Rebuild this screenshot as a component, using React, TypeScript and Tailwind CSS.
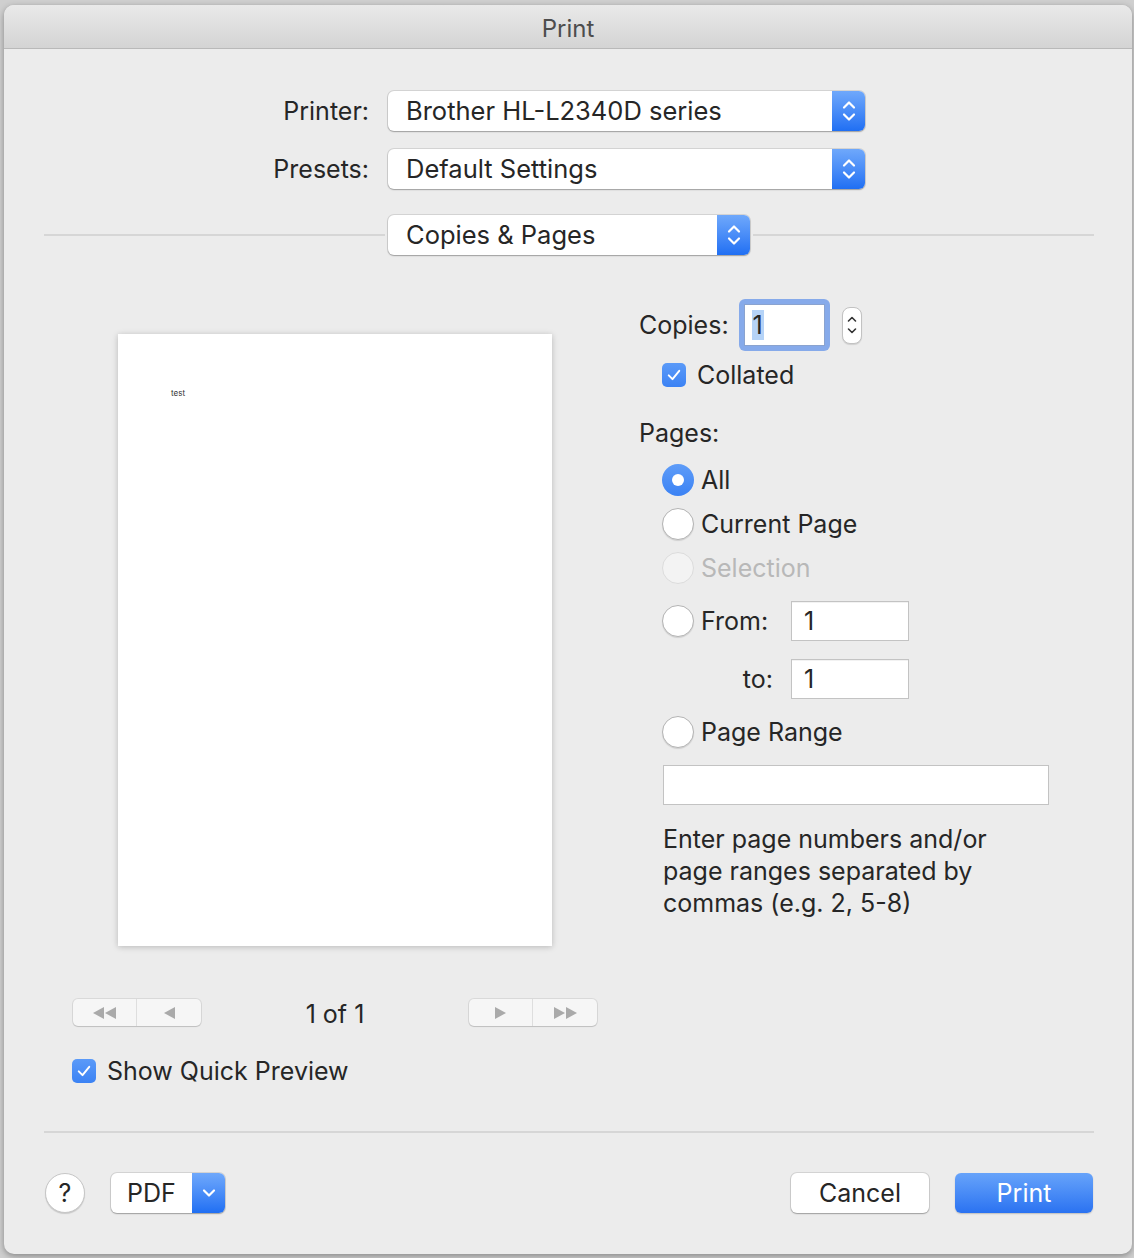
import React from 'react';

function UpDown({ className = 'w-[16px] h-[26px]' }: { className?: string }) {
  return (
    <svg viewBox="0 0 16 26" className={className} fill="none">
      <path d="M3 9.5 L8 4.5 L13 9.5" stroke="white" strokeWidth="2.2" strokeLinecap="round" strokeLinejoin="round" />
      <path d="M3 16.5 L8 21.5 L13 16.5" stroke="white" strokeWidth="2.2" strokeLinecap="round" strokeLinejoin="round" />
    </svg>
  );
}

function Popup({ label, className }: { label: string; className: string }) {
  return (
    <div
      className={`flex h-[40px] rounded-[6px] bg-white shadow-[0_0_0_1px_rgba(0,0,0,0.1),0_1px_1.5px_rgba(0,0,0,0.25)] ${className}`}
    >
      <div className="flex flex-1 items-center pl-[18px] text-[25.5px] text-[#262626]">{label}</div>
      <div className="flex w-[33px] items-center justify-center rounded-r-[6px] bg-linear-to-b from-[#6fa8fb] to-[#1f6ff3]">
        <UpDown />
      </div>
    </div>
  );
}

function Check() {
  return (
    <div className="flex h-[24px] w-[24px] items-center justify-center rounded-[5px] bg-linear-to-b from-[#5b9af8] to-[#3b82f4]">
      <svg viewBox="0 0 24 24" className="h-[18px] w-[18px]" fill="none">
        <path d="M5 12.5 L10 17.5 L19 6.5" stroke="white" strokeWidth="2.6" strokeLinecap="round" strokeLinejoin="round" />
      </svg>
    </div>
  );
}

function Radio({ state }: { state: 'on' | 'off' | 'disabled' }) {
  if (state === 'on') {
    return (
      <div className="flex h-[32px] w-[32px] items-center justify-center rounded-full bg-linear-to-b from-[#5e9cf8] to-[#3b82f4]">
        <div className="h-[12px] w-[12px] rounded-full bg-white" />
      </div>
    );
  }
  if (state === 'disabled') {
    return <div className="h-[32px] w-[32px] rounded-full border border-[#dcdcdc] bg-[#f3f3f3]" />;
  }
  return (
    <div className="h-[32px] w-[32px] rounded-full border border-[#b4b4b4] bg-white shadow-[0_1px_1px_rgba(0,0,0,0.12)]" />
  );
}

function Tri({ dir, double }: { dir: 'l' | 'r'; double?: boolean }) {
  const one = dir === 'l' ? 'M11 0 L11 12 L0 6 Z' : 'M0 0 L0 12 L11 6 Z';
  const two = dir === 'l' ? 'M23 0 L23 12 L12 6 Z' : 'M12 0 L12 12 L23 6 Z';
  return (
    <svg viewBox={double ? '0 0 23 12' : '0 0 11 12'} className={double ? 'h-[12px] w-[23px]' : 'h-[12px] w-[11px]'}>
      <path d={one} fill="#aaaaaa" />
      {double && <path d={two} fill="#aaaaaa" />}
    </svg>
  );
}

function NavGroup({ side }: { side: 'l' | 'r' }) {
  return (
    <div className="flex h-[27px] w-[128px] rounded-[5px] bg-[#f6f6f6] shadow-[0_0_0_1px_rgba(0,0,0,0.08),0_1px_1px_rgba(0,0,0,0.12)]">
      <div className="flex w-[64px] items-center justify-center border-r border-[#dedede]">
        {side === 'l' ? <Tri dir="l" double /> : <Tri dir="r" />}
      </div>
      <div className="flex flex-1 items-center justify-center">
        {side === 'l' ? <Tri dir="l" /> : <Tri dir="r" double />}
      </div>
    </div>
  );
}

function Field({ value, className }: { value: string; className: string }) {
  return (
    <div
      className={`flex h-[40px] items-center border border-[#c3c3c3] bg-white pl-[12px] text-[25px] text-[#262626] shadow-[inset_0_1px_0_rgba(0,0,0,0.05)] ${className}`}
    >
      {value}
    </div>
  );
}

export default function App() {
  return (
    <div className="h-[1258px] w-[1134px] overflow-hidden bg-[#cfcfcf] font-['Inter',sans-serif] text-[25px] leading-[32px] text-[#262626]">
      <div className="ml-[4px] mt-[5px] flex h-[1249px] w-[1128px] flex-col overflow-hidden rounded-[10px] bg-[#ececec] shadow-[0_2px_6px_rgba(0,0,0,0.35)]">
        <div className="flex h-[44px] shrink-0 items-center justify-center border-b border-[#b9b9b9] bg-linear-to-b from-[#e9e9e9] to-[#d4d4d4] pt-[5px] text-[24px] text-[#4d4d4d]">
          Print
        </div>

        <div className="mt-[42px] flex items-center">
          <div className="w-[365px] text-right">Printer:</div>
          <Popup label="Brother HL-L2340D series" className="ml-[19px] w-[477px]" />
        </div>
        <div className="mt-[18px] flex items-center">
          <div className="w-[365px] text-right">Presets:</div>
          <Popup label="Default Settings" className="ml-[19px] w-[477px]" />
        </div>
        <div className="mt-[26px] flex items-center pl-[40px] pr-[38px]">
          <div className="h-[2px] w-[341px] bg-[#d6d6d6]" />
          <Popup label="Copies & Pages" className="mx-[3px] w-[362px]" />
          <div className="h-[2px] flex-1 bg-[#d6d6d6]" />
        </div>

        <div className="flex">
          <div className="w-[635px] shrink-0">
            <div className="ml-[114px] mt-[79px] h-[612px] w-[434px] bg-white pl-[53px] pt-[54px] shadow-[0_1px_6px_rgba(0,0,0,0.22)]">
              <div className="text-[8px] leading-[10px] text-[#333]">test</div>
            </div>
            <div className="ml-[69px] mt-[53px] flex h-[27px] w-[524px] items-center justify-between">
              <NavGroup side="l" />
              <div className="pt-[3px]">1 of 1</div>
              <NavGroup side="r" />
            </div>
            <div className="ml-[68px] mt-[29px] flex items-center gap-[11px]">
              <Check />
              <div>Show Quick Preview</div>
            </div>
          </div>

          <div className="flex-1 pt-[44px]">
            <div className="flex items-center">
              <div>Copies:</div>
              <div className="ml-[10px] rounded-[6px] bg-[#86aaea] p-[5px]">
                <div className="flex h-[42px] w-[81px] items-center border border-[#8aa3cf] bg-white pl-[7px]">
                  <span className="bg-[#b5d3f7] px-[1px] leading-[30px]">1</span>
                </div>
              </div>
              <div className="ml-[12px] flex h-[37px] w-[20px] flex-col items-center justify-center rounded-[8px] border border-[#c2c2c2] bg-white shadow-[0_1px_1px_rgba(0,0,0,0.12)]">
                <svg viewBox="0 0 12 26" className="h-[26px] w-[12px]" fill="none">
                  <path d="M2.5 9 L6 5.5 L9.5 9" stroke="#333" strokeWidth="1.6" strokeLinecap="round" strokeLinejoin="round" />
                  <path d="M2.5 17 L6 20.5 L9.5 17" stroke="#333" strokeWidth="1.6" strokeLinecap="round" strokeLinejoin="round" />
                </svg>
              </div>
            </div>
            <div className="ml-[23px] mt-[8px] flex items-center gap-[11px]">
              <Check />
              <div>Collated</div>
            </div>

            <div className="mt-[26px]">Pages:</div>

            <div className="ml-[23px] mt-[15px] flex flex-col">
              <div className="flex items-center gap-[7px]">
                <Radio state="on" />
                <div>All</div>
              </div>
              <div className="mt-[12px] flex items-center gap-[7px]">
                <Radio state="off" />
                <div>Current Page</div>
              </div>
              <div className="mt-[12px] flex items-center gap-[7px]">
                <Radio state="disabled" />
                <div className="text-[#b8b8b8]">Selection</div>
              </div>
              <div className="mt-[17px] flex items-center">
                <Radio state="off" />
                <div className="ml-[7px] w-[72px]">From:</div>
                <Field value="1" className="ml-[18px] w-[118px]" />
              </div>
              <div className="mt-[18px] flex items-center">
                <div className="w-[32px]" />
                <div className="ml-[7px] w-[72px] text-right">to:</div>
                <Field value="1" className="ml-[18px] w-[118px]" />
              </div>
              <div className="mt-[17px] flex items-center gap-[7px]">
                <Radio state="off" />
                <div>Page Range</div>
              </div>
              <div className="ml-[1px] mt-[17px] h-[40px] w-[386px] border border-[#c3c3c3] bg-white" />
              <div className="ml-[1px] mt-[18px]">
                Enter page numbers and/or
                <br />
                page ranges separated by
                <br />
                commas (e.g. 2, 5-8)
              </div>
            </div>
          </div>
        </div>

        <div className="ml-[40px] mr-[38px] mt-[44px] h-[2px] shrink-0 bg-[#d6d6d6]" />

        <div className="mt-[40px] flex items-center pl-[41px] pr-[39px]">
          <div className="flex h-[40px] w-[40px] items-center justify-center rounded-full border border-[#c6c6c6] bg-white shadow-[0_1px_1px_rgba(0,0,0,0.15)]">
            ?
          </div>
          <div className="ml-[26px] flex h-[40px] w-[114px] rounded-[6px] bg-white shadow-[0_0_0_1px_rgba(0,0,0,0.1),0_1px_1.5px_rgba(0,0,0,0.25)]">
            <div className="flex flex-1 items-center justify-center">PDF</div>
            <div className="flex w-[33px] items-center justify-center rounded-r-[6px] bg-linear-to-b from-[#6fa8fb] to-[#1f6ff3]">
              <svg viewBox="0 0 16 12" className="h-[12px] w-[16px]" fill="none">
                <path d="M3 3.5 L8 8.5 L13 3.5" stroke="white" strokeWidth="2.2" strokeLinecap="round" strokeLinejoin="round" />
              </svg>
            </div>
          </div>
          <div className="flex-1" />
          <div className="flex h-[40px] w-[138px] items-center justify-center rounded-[6px] bg-white shadow-[0_0_0_1px_rgba(0,0,0,0.1),0_1px_1.5px_rgba(0,0,0,0.25)]">
            Cancel
          </div>
          <div className="ml-[26px] flex h-[40px] w-[138px] items-center justify-center rounded-[6px] bg-linear-to-b from-[#67a3fa] to-[#2a72f1] text-white shadow-[0_1px_1.5px_rgba(0,0,0,0.2)]">
            Print
          </div>
        </div>
      </div>
    </div>
  );
}
